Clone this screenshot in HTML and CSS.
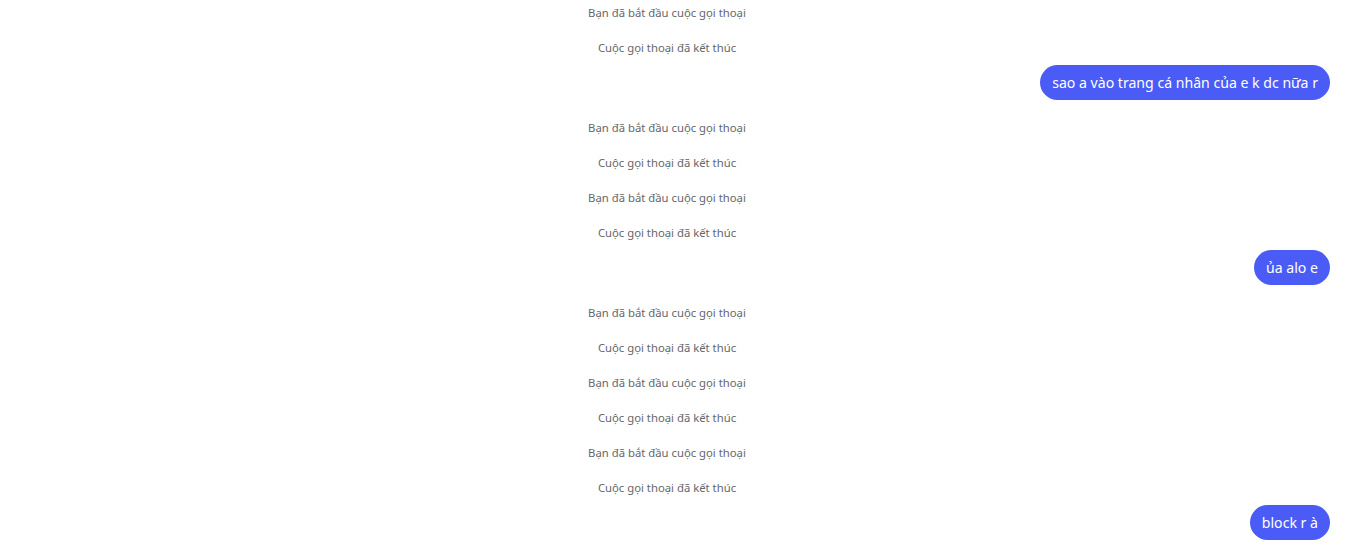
FILE: index.html
```html
<!DOCTYPE html>
<html lang="vi">
<head>
<meta charset="utf-8">
<link rel="stylesheet" href="styles.css">
</head>
<body>
<div class="chat">
  <div class="sys">Bạn đã bắt đầu cuộc gọi thoại</div>
  <div class="sys">Cuộc gọi thoại đã kết thúc</div>
  <div class="msg"><span class="bubble">sao a vào trang cá nhân của e k dc nữa r</span></div>
  <div class="sys">Bạn đã bắt đầu cuộc gọi thoại</div>
  <div class="sys">Cuộc gọi thoại đã kết thúc</div>
  <div class="sys">Bạn đã bắt đầu cuộc gọi thoại</div>
  <div class="sys">Cuộc gọi thoại đã kết thúc</div>
  <div class="msg"><span class="bubble">ủa alo e</span></div>
  <div class="sys">Bạn đã bắt đầu cuộc gọi thoại</div>
  <div class="sys">Cuộc gọi thoại đã kết thúc</div>
  <div class="sys">Bạn đã bắt đầu cuộc gọi thoại</div>
  <div class="sys">Cuộc gọi thoại đã kết thúc</div>
  <div class="sys">Bạn đã bắt đầu cuộc gọi thoại</div>
  <div class="sys">Cuộc gọi thoại đã kết thúc</div>
  <div class="msg"><span class="bubble">block r à</span></div>
</div>
</body>
</html>
```
FILE: styles.css
```css
html, body {
  margin: 0;
  padding: 0;
  background: #ffffff;
  overflow: hidden;
}
body {
  font-family: "Noto Sans", "Open Sans", sans-serif;
}
.chat {
  display: flex;
  flex-direction: column;
  margin-top: -5px;
  padding-right: 17px;
}
.sys {
  height: 35px;
  display: flex;
  align-items: center;
  justify-content: center;
  padding-left: 4px;
  font-size: 11.3px;
  color: #65676b;
}
.msg {
  display: flex;
  justify-content: flex-end;
  margin-bottom: 10px;
}
.bubble {
  height: 35px;
  box-sizing: border-box;
  display: flex;
  align-items: center;
  padding: 0 12px 1px;
  border-radius: 18px;
  background: #4b5cf6;
  color: #ffffff;
  font-size: 14.1px;
}
```
